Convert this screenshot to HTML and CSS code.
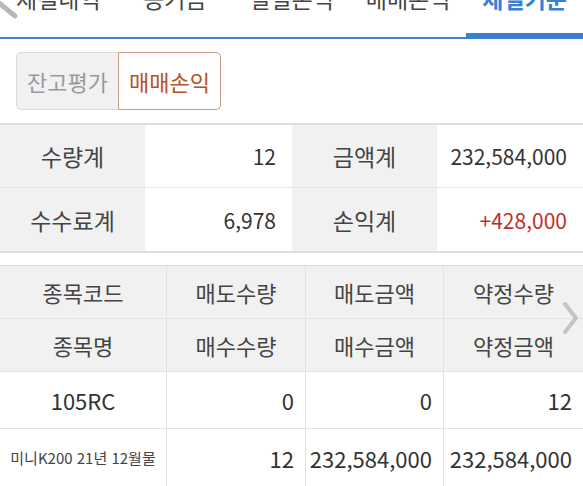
FILE: index.html
```html
<!DOCTYPE html>
<html lang="ko">
<head>
<meta charset="utf-8">
<link rel="stylesheet" href="styles.css">
</head>
<body>
<div class="page">
  <nav class="tabs">
    <svg class="scroll-hint" width="24" height="24" viewBox="0 0 24 24"><line x1="-2" y1="2" x2="15" y2="16" stroke="#b8b8b8" stroke-width="5" stroke-linecap="round"/></svg>
    <div class="tab"><span>체결내역</span></div>
    <div class="tab"><span>증거금</span></div>
    <div class="tab"><span>일별손익</span></div>
    <div class="tab"><span>매매손익</span></div>
    <div class="tab active"><span>체결기준</span></div>
  </nav>

  <div class="toggle">
    <div class="seg">잔고평가</div>
    <div class="seg on">매매손익</div>
  </div>

  <div class="summary">
    <div class="lbl">수량계</div>
    <div class="val">12</div>
    <div class="lbl">금액계</div>
    <div class="val">232,584,000</div>
    <div class="lbl">수수료계</div>
    <div class="val">6,978</div>
    <div class="lbl">손익계</div>
    <div class="val up">+428,000</div>
  </div>

  <div class="grid-wrap">
    <div class="grid">
      <div class="hd">종목코드</div>
      <div class="hd">매도수량</div>
      <div class="hd">매도금액</div>
      <div class="hd">약정수량</div>
      <div class="hd">종목명</div>
      <div class="hd">매수수량</div>
      <div class="hd">매수금액</div>
      <div class="hd">약정금액</div>
      <div class="cell c">105RC</div>
      <div class="cell">0</div>
      <div class="cell">0</div>
      <div class="cell">12</div>
      <div class="cell c small">미니K200 21년 12월물</div>
      <div class="cell">12</div>
      <div class="cell">232,584,000</div>
      <div class="cell">232,584,000</div>
    </div>
    <svg class="more" width="18" height="34" viewBox="0 0 18 34"><polyline points="3,3 14,17 3,31" fill="none" stroke="#c4c4c4" stroke-width="4" stroke-linecap="round" stroke-linejoin="round"/></svg>
  </div>
</div>
</body>
</html>
```

FILE: styles.css
```css
* { box-sizing: border-box; }
html, body { margin: 0; padding: 0; background: #fff; }
body {
  font-family: "Noto Sans CJK KR", "Noto Sans", sans-serif;
  font-weight: 400;
  color: #333;
  width: 583px;
  height: 486px;
  overflow: hidden;
}
.page { width: 583px; }

.tabs {
  position: relative;
  display: flex;
  height: 39px;
  border-bottom: 2px solid #3f82cc;
}
.scroll-hint { position: absolute; left: 0; top: 0; }
.tab {
  flex: 1;
  text-align: center;
  font-size: 23px;
  line-height: 24px;
  color: #444;
  margin-bottom: -2px;
}
.tab span { display: block; margin-top: -14px; }
.tab.active {
  color: #3a7fd0;
  font-weight: 700;
  border-bottom: 6px solid #3a7fd0;
}

.toggle {
  display: flex;
  margin: 13px 0 0 16px;
  width: 205px;
  height: 58px;
}
.seg {
  flex: 1;
  display: flex;
  align-items: center;
  justify-content: center;
  font-size: 22px;
  color: #9a9a9a;
  background: #f1f1f1;
  border: 1px solid #dcdcdc;
  border-right: none;
  border-radius: 5px 0 0 5px;
}
.seg.on {
  color: #b5531f;
  background: #fff;
  border: 1px solid #c99a80;
  border-radius: 0 5px 5px 0;
}

.summary {
  display: grid;
  grid-template-columns: 145px 147px 145px 146px;
  grid-auto-rows: 63px;
  margin-top: 13px;
  border-top: 2px solid #dedede;
  border-bottom: 2px solid #dedede;
}
.summary > div {
  display: flex;
  align-items: center;
  font-size: 21px;
  color: #333;
}
.summary > div:nth-child(-n+4) { border-bottom: 1px solid #e6e6e6; }
.summary > .lbl { justify-content: center; background: #f1f1f1; color: #444; font-size: 23px; }
.val { justify-content: flex-end; padding-right: 16px; background: #fff; }
.val.up { color: #c0302b; }

.grid-wrap { position: relative; margin-top: 12px; }
.grid {
  display: grid;
  grid-template-columns: 166px 139px 138px 140px;
  grid-template-rows: 53px 53px 57px 58px;
  border-top: 1px solid #dedede;
}
.hd, .cell {
  display: flex;
  align-items: center;
  border-bottom: 1px solid #e2e2e2;
  border-left: 1px solid #e2e2e2;
}
.grid > div:nth-child(4n+1) { border-left: none; }
.hd { justify-content: center; background: #f1f1f1; color: #444; font-size: 22px; }
.cell { justify-content: flex-end; padding-right: 11px; font-size: 22px; color: #333; background: #fff; }
.cell.c { justify-content: center; padding-right: 0; }
.cell.small { font-size: 15px; color: #444; }
.more { position: absolute; right: 3px; top: 36px; }
```
